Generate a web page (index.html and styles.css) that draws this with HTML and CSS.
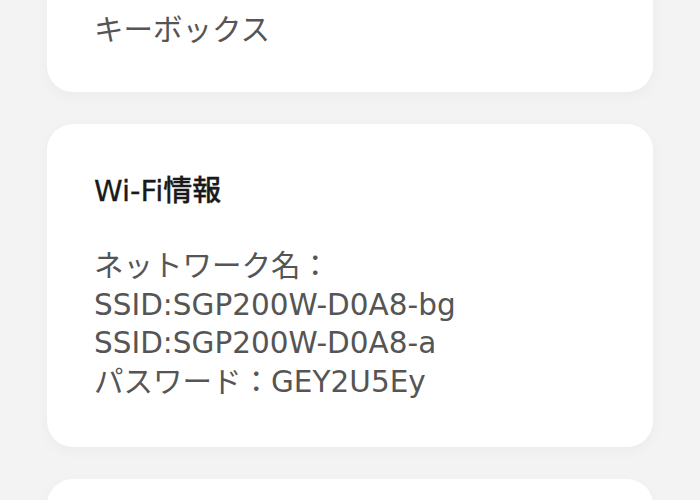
FILE: index.html
```html
<!DOCTYPE html>
<html lang="ja">
<head>
<meta charset="utf-8">
<link rel="stylesheet" href="styles.css">
</head>
<body>
<main class="list">
  <section class="card card-first">
    <p class="body-text">キーボックス</p>
  </section>
  <section class="card card-wifi">
    <h2 class="card-title">Wi-Fi情報</h2>
    <div class="body-text">
      <p>ネットワーク名：</p>
      <p>SSID:SGP200W-D0A8-bg</p>
      <p>SSID:SGP200W-D0A8-a</p>
      <p>パスワード：GEY2U5Ey</p>
    </div>
  </section>
  <section class="card card-next"></section>
</main>
</body>
</html>
```

FILE: styles.css
```css
html, body {
  margin: 0;
  padding: 0;
  background: #f3f3f3;
  height: 500px;
  overflow: hidden;
}
body {
  font-family: "DejaVu Sans", "Noto Sans CJK JP", sans-serif;
}
.list {
  display: flex;
  flex-direction: column;
  gap: 32px;
  padding: 0 47px;
}
.card {
  background: #ffffff;
  border-radius: 26px;
  box-shadow: 0 4px 14px rgba(0, 0, 0, 0.035);
  padding: 0 47px;
}
.card-first {
  margin-top: -60px;
  padding-top: 68px;
  height: 152px;
  box-sizing: border-box;
}
.body-text {
  margin: 0;
  color: #555555;
  font-size: 29.5px;
  line-height: 38.5px;
}
.body-text p {
  margin: 0;
}
.card-first .body-text {
  font-family: "Noto Sans CJK JP", sans-serif;
  font-size: 29.5px;
}
.card-wifi {
  padding-top: 48px;
  padding-bottom: 46px;
}
.card-title {
  margin: 0 0 37px;
  font-family: "DejaVu Sans", "Noto Sans CJK JP", sans-serif;
  font-size: 29px;
  font-weight: 500;
  -webkit-text-stroke: 0.3px #1a1a1a;
  line-height: 38px;
  color: #1a1a1a;
}
.card-next {
  height: 80px;
}
```
